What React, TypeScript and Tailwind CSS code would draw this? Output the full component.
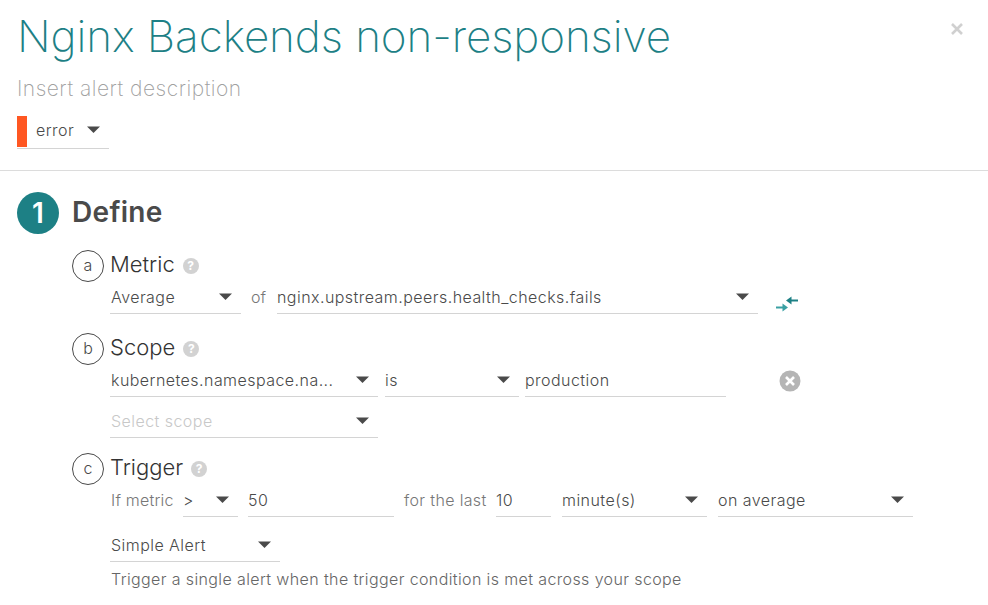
import React from "react";

const Caret = () => (
  <svg width="13" height="7" viewBox="0 0 13 7" className="shrink-0">
    <path d="M0 0.5 H13 L6.5 7 Z" fill="#4a4a4a" />
  </svg>
);

function Sel({ w, text, muted, pl = "" }: { w: string; text: string; muted?: boolean; pl?: string }) {
  return (
    <div className={`${w} pr-[9px] ${pl} h-[34px] border-b border-[#d4d4d4] flex items-center justify-between shrink-0`}>
      <span className={`text-[16px] font-light tracking-[0.45px] whitespace-nowrap ${muted ? "text-[#c8c8c8]" : "text-[#4a4a4a]"}`}>{text}</span>
      <Caret />
    </div>
  );
}

function Field({ w, text }: { w: string; text: string }) {
  return (
    <div className={`${w} h-[34px] border-b border-[#d4d4d4] flex items-center shrink-0`}>
      <span className="text-[16px] font-light tracking-[0.45px] text-[#4a4a4a]">{text}</span>
    </div>
  );
}

const Help = () => (
  <span className="ml-2 w-4 h-4 rounded-full bg-[#d2d2d2] text-white text-[12px] font-bold flex items-center justify-center">?</span>
);

function Head({ letter, title }: { letter: string; title: string }) {
  return (
    <div className="flex items-center h-[32px]">
      <span className="w-[32px] h-[32px] rounded-full border border-[#4a4a4a] text-[#4a4a4a] text-[16px] font-light flex items-center justify-center shrink-0 pb-[3px]">{letter}</span>
      <span className="ml-[6px] text-[22px] font-light text-[#333] leading-[28px] pb-[4px]">{title}</span>
      <Help />
    </div>
  );
}

export default function App() {
  return (
    <div className="relative w-[988px] h-[605px] overflow-hidden bg-white" style={{ fontFamily: "Inter, Lato, sans-serif" }}>
      <button className="absolute left-[950px] top-[22px] text-[#d0d0d0]" aria-label="close">
        <svg width="14" height="14" viewBox="0 0 14 14"><path d="M2 2 L12 12 M12 2 L2 12" stroke="currentColor" strokeWidth="2.6" /></svg>
      </button>

      <div className="h-[171px] border-b border-[#dcdcdc] pl-[17px]">
        <h1 className="pt-[6px] text-[44px] leading-[60px] font-extralight text-[#1d8085] tracking-[-0.1px]">Nginx Backends non-responsive</h1>
        <p className="mt-[8px] text-[21px] leading-[30px] font-extralight text-[#a0a0a0] tracking-[0.5px]">Insert alert description</p>
        <div className="mt-[12px] w-[92px] h-[33px] border-b border-[#d4d4d4] flex items-stretch">
          <span className="w-[10px] h-[31px] bg-[#ff5722]" />
          <div className="flex-1 flex items-center justify-between pl-[9px] pr-[9px] pb-[5px]">
            <span className="text-[16px] font-light tracking-[0.45px] text-[#4a4a4a]">error</span>
            <Caret />
          </div>
        </div>
      </div>

      <div className="pl-[17px] pt-[21px]">
        <div className="flex items-center h-[42px]">
          <span className="w-[42px] h-[42px] rounded-full bg-[#1d8085] text-white text-[28px] font-semibold flex items-center justify-center">1</span>
          <span className="ml-[13px] text-[28px] font-semibold text-[#4a4a4a] tracking-[0.3px] pb-[3px]">Define</span>
        </div>

        <div className="ml-[55px] mt-[16px]">
          <Head letter="a" title="Metric" />
          <div className="ml-[38px] mt-[-2px] flex items-center">
            <Sel w="w-[131px]" text="Average" pl="pl-px" />
            <span className="ml-[10px] w-[26px] text-[16px] font-light text-[#777]">of</span>
            <Sel w="w-[481px]" text="nginx.upstream.peers.health_checks.fails" />
            <svg width="22" height="16" viewBox="0 0 22 16" className="ml-[18px] mt-[14px]">
              <path d="M0 11.5 H7" stroke="#3aa0a3" strokeWidth="2" fill="none" />
              <path d="M6.5 7.5 L12 11.5 L6.5 15.5 Z" fill="#3aa0a3" />
              <path d="M22 4.5 H15" stroke="#1d8085" strokeWidth="2" fill="none" />
              <path d="M15.5 0.5 L10 4.5 L15.5 8.5 Z" fill="#1d8085" />
            </svg>
          </div>

          <div className="mt-[19px]"><Head letter="b" title="Scope" /></div>
          <div className="ml-[38px] mt-[-2px] flex items-center">
            <Sel w="w-[268px]" text="kubernetes.namespace.na..." pl="pl-px" />
            <Sel w="w-[134px] ml-[7px]" text="is" />
            <Field w="w-[201px] ml-[6px]" text="production" />
            <svg width="22" height="22" viewBox="0 0 22 22" className="ml-[53px] mt-[2px]">
              <circle cx="11" cy="11" r="10.5" fill="#b5b5b5" />
              <path d="M7 7 L15 15 M15 7 L7 15" stroke="#fff" strokeWidth="2.6" />
            </svg>
          </div>
          <div className="ml-[38px] mt-[7px] flex">
            <Sel w="w-[268px]" text="Select scope" muted pl="pl-px" />
          </div>

          <div className="mt-[15px]"><Head letter="c" title="Trigger" /></div>
          <div className="ml-[38px] mt-[-2px] flex items-center">
            <span className="w-[73px] pl-px text-[16px] font-light tracking-[0.2px] text-[#777]">If metric</span>
            <Sel w="w-[55px]" text=">" />
            <Field w="w-[146px] ml-[10px]" text="50" />
            <span className="ml-[10px] w-[92px] text-[16px] font-light tracking-[0.35px] text-[#777] whitespace-nowrap">for the last</span>
            <Field w="w-[55px]" text="10" />
            <Sel w="w-[145px] ml-[11px]" text="minute(s)" />
            <Sel w="w-[195px] ml-[11px]" text="on average" />
          </div>
          <div className="ml-[38px] mt-[11px] flex">
            <Sel w="w-[170px]" text="Simple Alert" pl="pl-px" />
          </div>
          <p className="ml-[39px] mt-[6px] text-[16px] font-light tracking-[0.38px] leading-[22px] text-[#666] whitespace-nowrap">Trigger a single alert when the trigger condition is met across your scope</p>
        </div>
      </div>
    </div>
  );
}
